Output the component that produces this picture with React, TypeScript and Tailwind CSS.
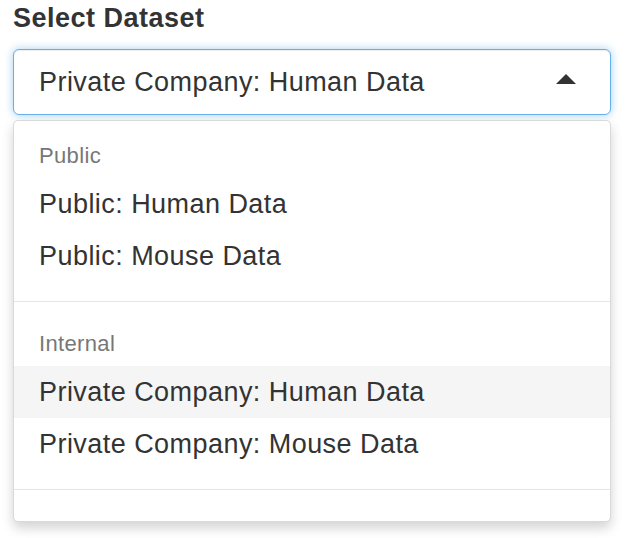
const groups = [
  { label: 'Public', items: ['Public: Human Data', 'Public: Mouse Data'] },
  { label: 'Internal', items: ['Private Company: Human Data', 'Private Company: Mouse Data'] },
]

const selected = 'Private Company: Human Data'

function Caret() {
  return (
    <svg width="20" height="10" viewBox="0 0 20 10" className="mb-[6px] shrink-0">
      <polygon points="10,0 20,10 0,10" fill="#333" />
    </svg>
  )
}

export default function App() {
  return (
    <div className="min-h-[538px] bg-white pl-[13px] pt-[2px] font-['Liberation_Sans',Arial,sans-serif] text-[#333]">
      <h1 className="h-[32px] text-[27px] font-bold leading-[32px] tracking-[0.5px]">Select Dataset</h1>

      <div className="w-[598px]">
        {/* the select, open */}
        <div className="mt-[15px] flex h-[66px] items-center rounded-[6px] border border-[#66afe9] bg-white pl-[25px] pr-[34px] shadow-[inset_0_1px_1px_rgba(0,0,0,0.075),0_0_8px_rgba(102,175,233,0.6)]">
          <span className="text-[27px] tracking-[0.45px]">{selected}</span>
          <div className="ml-auto">
            <Caret />
          </div>
        </div>

        <div className="mt-[5px] h-[402px] overflow-hidden rounded-[5px] border border-[#d9d9d9] bg-white pt-[12px] shadow-[0_6px_12px_rgba(0,0,0,0.175)]">
          {groups.map((g) => (
            <div key={g.label}>
              <div className="flex h-[45px] items-center pl-[25px] text-[22px] tracking-[0.35px] text-[#777]">
                {g.label}
              </div>
              {g.items.map((item) => (
                <div
                  key={item}
                  className={
                    'flex h-[52px] items-center pl-[25px] text-[27px] tracking-[0.45px] ' +
                    (item === selected ? 'bg-[#f5f5f5]' : '')
                  }
                >
                  {item}
                </div>
              ))}
              <div className="my-[19px] h-px bg-[#e5e5e5]" />
            </div>
          ))}
        </div>
      </div>
    </div>
  )
}
